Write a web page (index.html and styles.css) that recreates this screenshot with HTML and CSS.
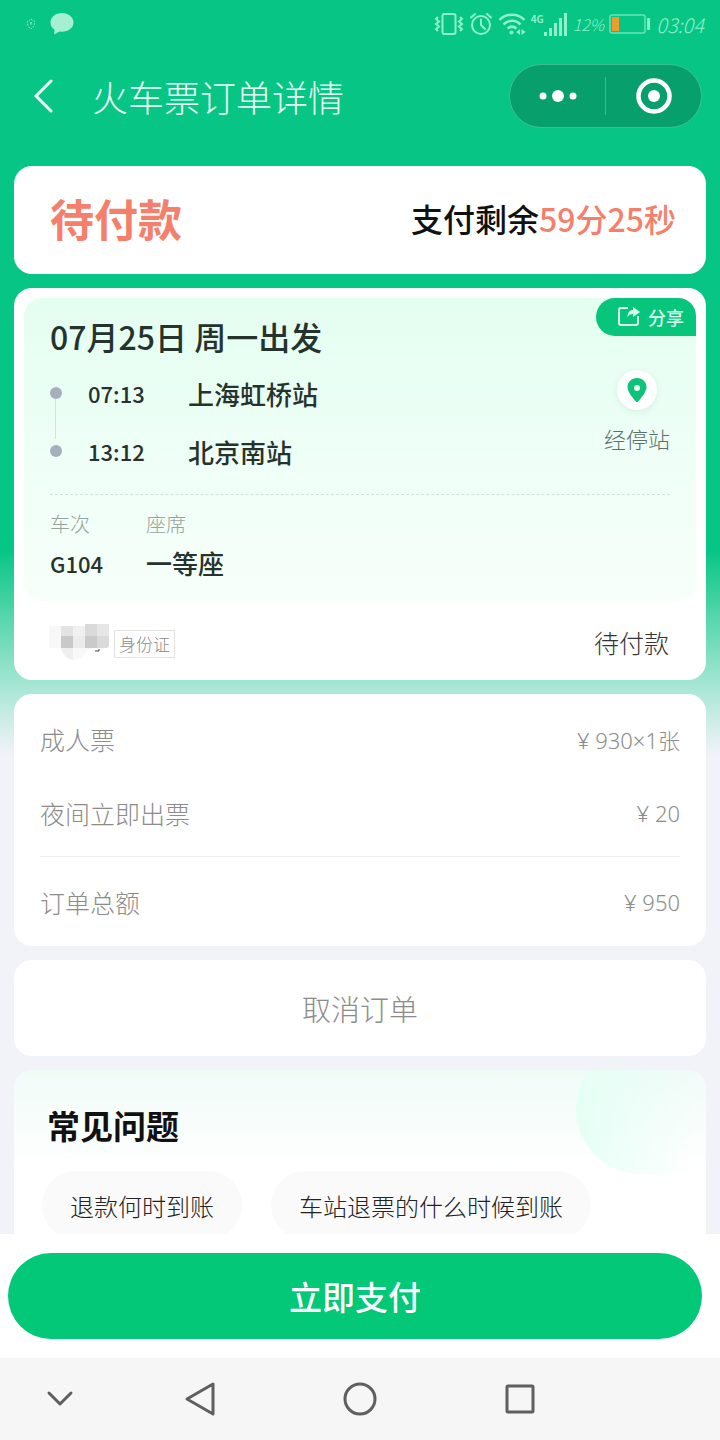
FILE: index.html
```
<!DOCTYPE html>
<html lang="zh-CN">
<head>
    <meta charset="UTF-8">
    <meta name="viewport" content="width=device-width, initial-scale=1.0">
    <title>火车票订单详情</title>
    <link rel="stylesheet" href="styles.css">
</head>
<body>
    <div class="status-bar">
        <div class="status-left">
            <svg width="10" height="12" viewBox="0 0 10 12" fill="none" stroke="#7ae6bd" stroke-width="1"><path d="M5 1 L9 4 L8 8 L5 11 L2 8 L1 4 Z" stroke-dasharray="2 1"/><path d="M5 4v3M4 5h2"/></svg>
            <svg width="24" height="22" viewBox="0 0 24 22" fill="#a5efd2"><path d="M12 0C5.400 0 .5 4 .5 9.500c0 3.200 1.600 5.800 4.200 7.500L4 21.500l5.500-3c.8.2 1.600.2 2.500.2 6.500 0 11.500-4 11.500-9.200S18.500 0 12 0z"/></svg>
        </div>
        <div class="status-right">
            <svg width="30" height="24" viewBox="0 0 30 24" fill="none" stroke="#8ff0cc" stroke-width="2"><rect x="8.500" y="2" width="13" height="20" rx="2"/><path d="M4 5l-2 2 3 2.500-3 2.500 3 2.500-3 2.500 2 2M26 5l2 2-3 2.500 3 2.500-3 2.500 3 2.500-2 2"/></svg>
            <svg width="24" height="24" viewBox="0 0 24 24" fill="none" stroke="#8ff0cc" stroke-width="2" stroke-linecap="round"><circle cx="12" cy="13" r="9"/><path d="M12 7.500V13l4 4M2 5.500l4-3.500M22 5.500L18 2"/></svg>
            <svg width="28" height="24" viewBox="0 0 28 24" fill="none" stroke="#8ff0cc" stroke-width="2.500"><path d="M1.500 8C8 1 20 1 26.500 8M5.500 12.500c5-5 12-5 17 0M9.500 16.500c3-2.500 6-2.500 9 0"/><circle cx="13.500" cy="20.500" r="2" fill="#8ff0cc" stroke="none"/><path d="M22 17v6l-4-3zM23.500 17v6l4-3z" fill="#8ff0cc" stroke="none"/></svg>
            <div class="signal">
                <span>4G</span>
                <svg width="24" height="23" viewBox="0 0 24 23" fill="#8ff0cc"><rect x="0" y="19" width="3" height="4"/><rect x="5" y="15" width="3" height="8"/><rect x="10" y="10" width="3" height="13"/><rect x="15" y="5" width="3" height="18"/><rect x="20" y="0" width="3" height="23"/></svg>
            </div>
            <span class="percent">12%</span>
            <svg width="42" height="20" viewBox="0 0 42 20"><rect x="1" y="1" width="35" height="18" rx="2" fill="none" stroke="#69e6b7" stroke-width="1.500"/><rect x="3" y="3" width="7" height="14" fill="#f19d2e"/><rect x="38" y="4" width="3" height="12" rx="1" fill="#8ff0cc"/></svg>
            <span class="clock">03:04</span>
        </div>
    </div>

    <header class="header">
        <button class="back" aria-label="返回">
            <svg width="22" height="34" viewBox="0 0 22 34" fill="none" stroke="#eafff6" stroke-width="3" stroke-linecap="round"><path d="M19 2L4 17l15 15"/></svg>
        </button>
        <h1>火车票订单详情</h1>
        <div class="capsule">
            <button aria-label="更多">
                <svg width="38" height="14" viewBox="0 0 38 14" fill="#fff"><circle cx="4" cy="7" r="3.500"/><circle cx="19" cy="7" r="6"/><circle cx="34" cy="7" r="3.500"/></svg>
            </button>
            <button aria-label="关闭">
                <svg width="36" height="36" viewBox="0 0 36 36"><circle cx="18" cy="18" r="15.500" fill="none" stroke="#fff" stroke-width="4.500"/><circle cx="18" cy="18" r="6" fill="#fff"/></svg>
            </button>
        </div>
    </header>

    <main class="content">
        <section class="card pay-status">
            <strong>待付款</strong>
            <p>支付剩余<span>59分25秒</span></p>
        </section>

        <section class="card order">
            <div class="trip">
                <button class="share">
                    <svg width="22" height="20" viewBox="0 0 22 20" fill="none" stroke="#d9ffef" stroke-width="2"><path d="M10 1H3a2 2 0 0 0-2 2v13a2 2 0 0 0 2 2h15a2 2 0 0 0 2-2V9"/><path d="M15 0l7 5-7 5V7c-3 0-4 1-5.500 3 0-4 2-7 5.500-7z" fill="#d9ffef" stroke="none"/></svg>
                    分享
                </button>
                <h2>07月25日 周一出发</h2>
                <div class="route">
                    <ul class="stations">
                        <li><time>07:13</time>上海虹桥站</li>
                        <li><time>13:12</time>北京南站</li>
                    </ul>
                    <button class="stops">
                        <span class="pin">
                            <svg width="20" height="26" viewBox="0 0 20 26"><path d="M10 1C4.500 1 .5 5 .5 10.200c0 4.300 4.300 9.300 8.300 14.300.7.8 1.700.8 2.400 0 4-5 8.300-10 8.300-14.300C19.500 5 15.500 1 10 1z" fill="#0ec27b"/><circle cx="10" cy="11" r="3" fill="#e2fff2"/></svg>
                        </span>
                        经停站
                    </button>
                </div>
                <dl class="seat">
                    <div><dt>车次</dt><dd class="train">G104</dd></div>
                    <div><dt>座席</dt><dd>一等座</dd></div>
                </dl>
            </div>
            <div class="passenger">
                <svg class="mosaic" width="60" height="36" viewBox="0 0 60 36" aria-hidden="true">
                    <rect x="0" y="2" width="12" height="22" fill="#f8f8f8"/>
                    <rect x="12" y="2" width="12" height="12" fill="#e3e3e3"/>
                    <rect x="24" y="2" width="12" height="12" fill="#f1f1f1"/>
                    <rect x="36" y="0" width="12" height="12" fill="#dadada"/>
                    <rect x="48" y="0" width="12" height="12" fill="#e6e6e6"/>
                    <rect x="12" y="12" width="12" height="12" fill="#c9c9c9"/>
                    <rect x="24" y="12" width="12" height="12" fill="#ececec"/>
                    <rect x="36" y="12" width="12" height="12" fill="#cacaca"/>
                    <path d="M48 12h12v9q0 3-3 3h-9z" fill="#dadada"/>
                    <path d="M12 24h12v12c-6-1-10-5-12-12z" fill="#efefef"/>
                    <path d="M24 24h16c-3 6-8 11-16 12z" fill="#f8f8f8"/>
                    <path d="M46 27h4v-2" fill="none" stroke="#444" stroke-width="1"/>
                </svg>
                <span class="id-type">身份证</span>
                <span class="ticket-state">待付款</span>
            </div>
        </section>

        <section class="card prices">
            <dl>
                <div><dt>成人票</dt><dd>¥ 930×1张</dd></div>
                <div><dt>夜间立即出票</dt><dd>¥ 20</dd></div>
                <div class="total"><dt>订单总额</dt><dd>¥ 950</dd></div>
            </dl>
        </section>

        <button class="card cancel">取消订单</button>

        <section class="card faq">
            <h2>常见问题</h2>
            <div class="questions">
                <button>退款何时到账</button>
                <button>车站退票的什么时候到账</button>
            </div>
        </section>
    </main>

    <footer class="pay-bar">
        <button>立即支付</button>
    </footer>

    <nav class="system-nav">
        <button aria-label="收起"><svg width="28" height="18" viewBox="0 0 28 18"><path d="M3 3l11 11L25 3"/></svg></button>
        <button aria-label="后退"><svg width="32" height="36" viewBox="0 0 32 36"><path d="M29 3v30L3 18z"/></svg></button>
        <button aria-label="主页"><svg width="36" height="36" viewBox="0 0 36 36"><circle cx="18" cy="18" r="15"/></svg></button>
        <button aria-label="最近任务"><svg width="32" height="32" viewBox="0 0 32 32"><rect x="3" y="3" width="26" height="26" rx="1"/></svg></button>
    </nav>
</body>
</html>
```
FILE: styles.css
```
* {
    box-sizing: border-box;
}
body {
    margin: 0;
    height: 100vh;
    display: flex;
    flex-direction: column;
    font-family: "Noto Sans CJK SC", sans-serif;
    font-weight: 300;
    color: #26332d;
    background: linear-gradient(#07c584 0, #07c584 550px, #a5e6d3 685px, #f1f3f9 755px);
}
h1, h2, p, ul, dl, dd {
    margin: 0;
    padding: 0;
}
button {
    font: inherit;
    color: inherit;
    background: none;
    border: none;
    padding: 0;
    cursor: pointer;
}
svg {
    display: block;
    flex: none;
}

/* Status bar */
.status-bar {
    flex: none;
    display: flex;
    justify-content: space-between;
    align-items: center;
    height: 48px;
    padding: 0 16px 0 26px;
    color: #8ff0cc;
}
.status-left {
    display: flex;
    align-items: center;
    gap: 14px;
}
.status-right {
    display: flex;
    align-items: center;
    gap: 5px;
}
.signal {
    display: flex;
}
.signal span {
    font-size: 10px;
    font-weight: 700;
    line-height: 12px;
}
.percent {
    font-size: 16px;
    font-style: italic;
}
.clock {
    font-size: 20px;
    font-style: italic;
}

/* Header */
.header {
    flex: none;
    display: flex;
    align-items: center;
    height: 118px;
    padding: 0 18px 22px 32px;
}
.back {
    width: 60px;
}
.header h1 {
    flex: 1;
    font-size: 36px;
    font-weight: 300;
    color: #e6fff5;
}
.capsule {
    display: flex;
    align-items: center;
    width: 193px;
    height: 64px;
    border: 1px solid #3cc194;
    border-radius: 32px;
    background: #079f6b;
}
.capsule button {
    flex: 1;
    display: flex;
    justify-content: center;
    align-items: center;
    height: 38px;
}
.capsule button + button {
    border-left: 1px solid #3cb88d;
}

/* Cards */
.content {
    flex: 1;
    min-height: 0;
    overflow: hidden;
    display: flex;
    flex-direction: column;
    gap: 14px;
    padding: 0 14px;
}
.card {
    flex: none;
    border-radius: 18px;
    background: #fff;
}
.pay-status {
    display: flex;
    justify-content: space-between;
    align-items: center;
    height: 108px;
    padding: 0 30px 4px 36px;
}
.pay-status strong {
    font-size: 44px;
    font-weight: 700;
    color: #f4806c;
}
.pay-status p {
    font-size: 32px;
    font-weight: 500;
    color: #111;
}
.pay-status span {
    color: #f4806c;
}

/* Order */
.order {
    padding: 10px;
}
.trip {
    position: relative;
    padding: 14px 26px 16px;
    border-radius: 18px;
    background: linear-gradient(#e4fef1, #f7fffb);
}
.share {
    position: absolute;
    top: 0;
    right: 0;
    display: flex;
    justify-content: center;
    align-items: center;
    gap: 8px;
    width: 100px;
    height: 38px;
    padding-left: 10px;
    border-radius: 19px 18px 0 19px;
    font-size: 18px;
    font-weight: 500;
    color: #d9ffef;
    background: #07c57a;
}
.trip h2 {
    font-size: 32px;
    font-weight: 500;
    line-height: 48px;
}
.route {
    display: flex;
    justify-content: space-between;
    height: 135px;
    border-bottom: 1px dashed #cfe3da;
}
.stations {
    list-style: none;
    padding-top: 4px;
    font-size: 26px;
    font-weight: 500;
}
.stations li {
    position: relative;
    display: flex;
    align-items: center;
    height: 58px;
    padding-left: 38px;
}
.stations li::before {
    content: "";
    position: absolute;
    left: 0;
    width: 12px;
    height: 12px;
    border-radius: 50%;
    background: #a5b0bd;
}
.stations li:first-child::after {
    content: "";
    position: absolute;
    left: 5px;
    top: 35px;
    width: 1px;
    height: 40px;
    background: #d3e2dc;
}
.stations time {
    width: 100px;
    font-size: 22px;
}
.stops {
    display: flex;
    flex-direction: column;
    align-items: center;
    gap: 12px;
    padding-top: 10px;
    font-size: 22px;
    line-height: 32px;
    color: #5d7068;
}
.pin {
    display: flex;
    justify-content: center;
    align-items: center;
    width: 40px;
    height: 40px;
    border-radius: 50%;
    background: #fff;
    box-shadow: 0 2px 6px rgba(0, 120, 80, 0.1);
}
.seat {
    display: flex;
    padding-top: 12px;
}
.seat div {
    width: 96px;
}
.seat dt {
    font-size: 20px;
    line-height: 34px;
    color: #97a39d;
}
.seat dd {
    font-size: 26px;
    font-weight: 500;
    line-height: 44px;
    white-space: nowrap;
}
.seat .train {
    font-size: 22px;
}
.passenger {
    display: flex;
    align-items: center;
    height: 69px;
    padding: 12px 27px 0 25px;
}
.id-type {
    margin: 5px 0 0 5px;
    padding: 0 4px;
    border: 1px solid #e2e2e2;
    font-size: 17px;
    line-height: 26px;
    color: #8b8b8b;
}
.ticket-state {
    margin-left: auto;
    font-size: 25px;
    color: #333;
}

/* Prices */
.prices {
    padding: 8px 26px 0;
    color: #8c8c8c;
}
.prices dl div {
    display: flex;
    justify-content: space-between;
    align-items: center;
    height: 74px;
    font-size: 25px;
}
.prices dl .total {
    height: 90px;
    margin-top: 6px;
    border-top: 1px solid #eee;
}
.prices dd {
    font-family: "Noto Sans", "Noto Sans CJK SC", sans-serif;
    font-size: 22px;
}
.cancel {
    height: 96px;
    font-size: 29px;
    color: #8c8c8c;
}

/* FAQ */
.faq {
    position: relative;
    overflow: hidden;
    height: 240px;
    padding: 31px 28px;
    background: linear-gradient(#f0fbf8, #fff 100px);
}
.faq::before {
    content: "";
    position: absolute;
    top: -26px;
    right: 0;
    width: 130px;
    height: 130px;
    border-radius: 65px 0 0 65px;
    background: linear-gradient(90deg, #e5fff5, rgba(245, 255, 251, 0) 90%);
}
.faq h2 {
    padding-left: 5px;
    font-size: 33px;
    font-weight: 700;
    line-height: 48px;
    color: #111;
}
.questions {
    display: flex;
    gap: 29px;
    padding-top: 22px;
}
.questions button {
    height: 68px;
    padding: 0 28px;
    border-radius: 34px;
    font-size: 24px;
    color: #222;
    background: #fafafa;
}

/* Bottom */
.pay-bar {
    flex: none;
    padding: 19px 18px 19px 8px;
    background: #fff;
}
.pay-bar button {
    display: block;
    width: 100%;
    height: 86px;
    border-radius: 43px;
    font-size: 33px;
    font-weight: 500;
    color: #fff;
    background: #03c878;
}
.system-nav {
    flex: none;
    display: grid;
    grid-template-columns: 3fr 4fr 4fr 4fr 3fr;
    height: 82px;
    background: #f6f6f6;
}
.system-nav button {
    display: flex;
    justify-content: center;
    align-items: center;
}
.system-nav svg {
    fill: none;
    stroke: #5f5f5f;
    stroke-width: 3;
    stroke-linecap: round;
    stroke-linejoin: round;
}
```
